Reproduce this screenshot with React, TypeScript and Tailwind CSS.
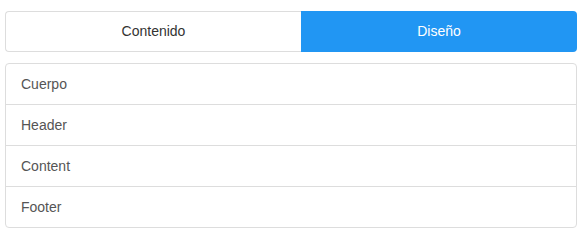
import React from "react";

export default function App() {
  const items = ["Cuerpo", "Header", "Content", "Footer"];
  return (
    <div className="w-[584px] h-[248px] bg-white pt-[11px] px-[5px]" style={{ fontFamily: '"Liberation Sans", Arial, sans-serif' }}>
      <div className="flex h-[41px] w-[572px]">
        <button className="w-[296px] h-full border border-[#dddddd] border-r-0 rounded-l-[4px] bg-white text-[14px] text-[#333333] flex items-center justify-center">
          Contenido
        </button>
        <button className="flex-1 h-full rounded-r-[4px] bg-[#2196f3] text-[14px] text-white flex items-center justify-center">
          Diseño
        </button>
      </div>
      <div className="mt-[11px] w-[572px] border border-[#dddddd] rounded-[4px] flex flex-col">
        {items.map((t, i) =>
          i < items.length - 1 ? (
            <div key={t} className="h-[41px] flex items-center px-[15px] text-[14px] text-[#555555] border-b border-[#dddddd]">
              {t}
            </div>
          ) : (
            <div key={t} className="h-[40px] flex items-center px-[15px] text-[14px] text-[#555555]">
              {t}
            </div>
          )
        )}
      </div>
    </div>
  );
}
